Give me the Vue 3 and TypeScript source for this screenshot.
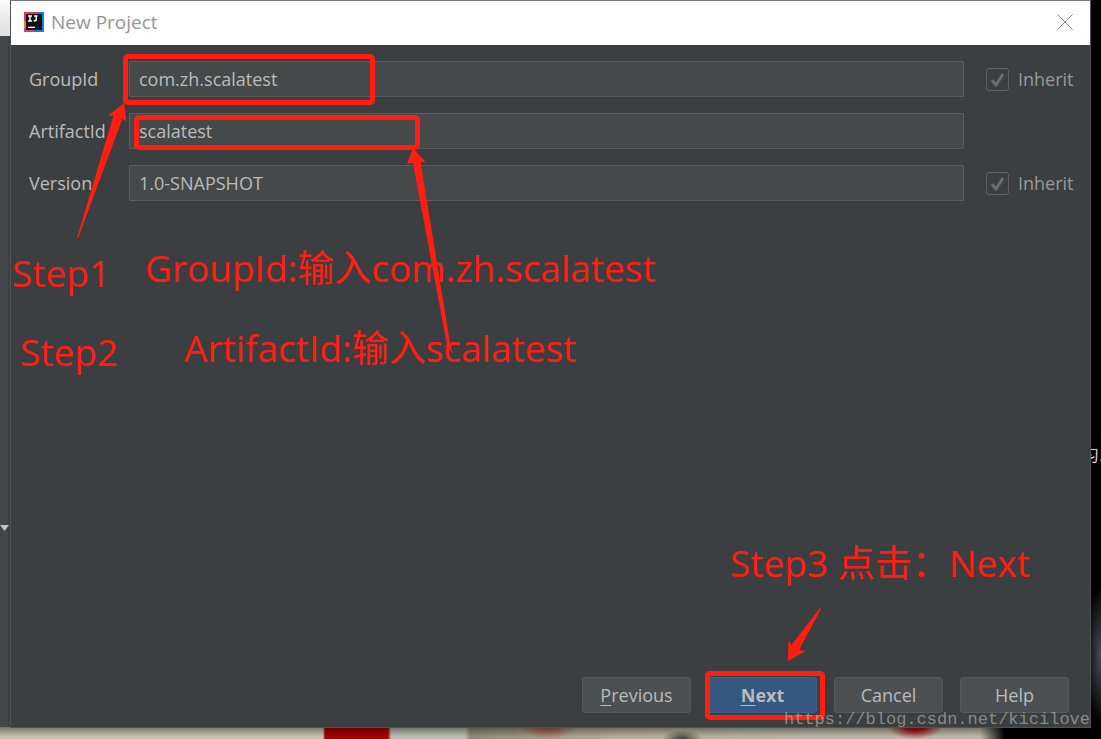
<script setup lang="ts">
import { ref } from 'vue'

interface Field {
  id: string
  label: string
  value: string
  inherit: boolean
  ring?: string
}

const fields = ref<Field[]>([
  { id: 'group', label: 'GroupId', value: 'com.zh.scalatest', inherit: true, ring: 'ring-group' },
  { id: 'artifact', label: 'ArtifactId', value: 'scalatest', inherit: false, ring: 'ring-artifact' },
  { id: 'version', label: 'Version', value: '1.0-SNAPSHOT', inherit: true },
])
</script>

<template>
  <div class="desktop">
    <svg class="left-caret" viewBox="0 0 9 6" aria-hidden="true"><path d="M0 0h9L4.5 6z" fill="#c4c4c4" /></svg>
    <span class="side-text" aria-hidden="true">习1</span>
    <div class="wallpaper" aria-hidden="true"></div>

    <main class="window">
      <header class="titlebar">
        <svg class="logo" viewBox="0 0 20 20" aria-hidden="true">
          <path d="M0 0h20v20H0z" fill="#087cfa" />
          <path d="M0 0h14L8 10 0 11z" fill="#e8315b" />
          <path d="M0 9l5 2-1 5-4 1z" fill="#f5852a" />
          <path d="M0 16l7-3 4 7H0z" fill="#d63a83" />
          <path d="M2 2h16v16H2z" fill="#111" />
          <path d="M4 4h4M6 4v5M4 9h4M10 4h3.500M12.300 4v3.500Q12.300 9 9.700 9" fill="none" stroke="#fff" stroke-width="1.500" />
          <path d="M4 14.700h7v1.300H4z" fill="#fff" />
        </svg>
        <h1>New Project</h1>
        <button class="close" type="button" aria-label="Close">
          <svg viewBox="0 0 16 16"><path d="M.5.5l15 15M15.500.5l-15 15" fill="none" stroke="#858585" stroke-width="1" /></svg>
        </button>
      </header>

      <form class="body" @submit.prevent>
        <div class="fields">
          <div v-for="f in fields" :key="f.id" class="row">
            <label :for="f.id">{{ f.label }}</label>
            <div class="control">
              <input :id="f.id" v-model="f.value" type="text" spellcheck="false" />
              <span v-if="f.ring" class="ring" :class="f.ring"></span>
            </div>
            <label v-if="f.inherit" class="inherit">
              <span class="tick">
                <input type="checkbox" checked disabled />
                <svg viewBox="0 0 23 23" aria-hidden="true"><path d="M6 12l4 5 7-11" fill="none" stroke="#6b6d6e" stroke-width="3" /></svg>
              </span>
              <span>Inherit</span>
            </label>
          </div>
        </div>

        <footer class="actions">
          <button type="button"><u>P</u>revious</button>
          <button type="submit" class="primary"><u>N</u>ext<span class="ring ring-next"></span></button>
          <button type="button">Cancel</button>
          <button type="button">Help</button>
        </footer>
      </form>
    </main>

    <div class="notes">
      <span class="note step1">Step1</span>
      <span class="note group-note">GroupId:输入com.zh.scalatest</span>
      <span class="note step2">Step2</span>
      <span class="note artifact-note">ArtifactId:输入scalatest</span>
      <svg class="arrows" width="470" height="370" viewBox="0 0 470 370" aria-hidden="true">
        <path d="M124 103l2.500 19-4-3.500L78 238.500l-1-.5 36.500-122.500-5.500.5z" />
        <path d="M413 148l13 14.500-5.500-.5L450 343l3 12-5-9-6 2 5-3L413 163l-6 1z" />
      </svg>
    </div>
    <div class="notes notes-end">
      <span class="note step3">Step3 点击：Next</span>
      <svg class="arrow-next" width="36" height="56" viewBox="0 0 36 56" aria-hidden="true">
        <path d="M34 1l1 1-22 41 6.500 1L2 54l.5-20 3 4z" />
      </svg>
    </div>
    <span class="watermark">https://blog.csdn.net/kicilove</span>
  </div>
</template>

<style>
body {
  margin: 0;
  background: #000;
}
</style>

<style scoped>
.desktop {
  position: relative;
  box-sizing: border-box;
  display: flex;
  min-height: 100vh;
  padding: 0 10px 11px;
  overflow: hidden;
  font-family: "Open Sans", "Noto Sans", "Noto Sans CJK SC", sans-serif;
  background:
    radial-gradient(ellipse 16px 70px at 100% 655px, #4c4a5a, transparent) no-repeat,
    linear-gradient(#fafafa, #dedede) 0 0 / 11px 36px no-repeat,
    linear-gradient(90deg, #454649 60%, #3b3c3e) 0 36px / 11px calc(100% - 48px) no-repeat,
    #000;
}
.wallpaper {
  position: absolute;
  left: 0;
  bottom: 0;
  width: 92%;
  height: 12px;
  background:
    linear-gradient(rgba(0, 0, 0, .4), transparent 80%),
    radial-gradient(ellipse 28px 12px at 915px 0, #a01418 30%, transparent) no-repeat,
    radial-gradient(ellipse 28px 12px at 548px 0, #a44b3c, transparent) no-repeat,
    radial-gradient(ellipse 20px 9px at 682px 12px, #4c5548 20%, transparent) no-repeat,
    linear-gradient(90deg, #c4c3ad 0 323px, #a80000 325px 388px, #b9bcb0 391px 465px, #8f8b76 470px, #b5ad98 620px, #bcb8a9 980px, #000 1005px);
}
.left-caret {
  position: absolute;
  left: 0;
  top: 525px;
  width: 9px;
  height: 6px;
}
.side-text {
  position: absolute;
  left: 1083px;
  top: 444px;
  width: 30px;
  color: #d8d8d8;
  font: 16px/20px "Noto Sans CJK SC", sans-serif;
}
.window {
  position: relative;
  box-sizing: border-box;
  display: flex;
  flex: 1;
  flex-direction: column;
  border: 1px solid #505355;
  border-top-color: #777;
  background: #3c3f41;
  color: #bbb;
}
.titlebar {
  display: flex;
  align-items: center;
  gap: 7px;
  box-sizing: border-box;
  height: 44px;
  padding: 0 17px 2px 13px;
  background: #fff;
}
.logo {
  width: 20px;
  height: 20px;
}
h1 {
  flex: 1;
  margin: 0;
  color: #959595;
  font-size: 19px;
  font-weight: 400;
  line-height: 24px;
}
.close {
  width: 16px;
  height: 16px;
  padding: 0;
  border: 0;
  background: none;
}
.close svg {
  display: block;
}
.body {
  display: flex;
  flex: 1;
  flex-direction: column;
  justify-content: space-between;
  padding: 16px 16px 14px 18px;
  font-size: 18px;
  line-height: 24px;
}
.fields {
  display: grid;
  gap: 16px;
}
.row {
  display: grid;
  grid-template-columns: 100px 1fr 110px;
  align-items: center;
}
.control {
  position: relative;
}
input[type="text"] {
  box-sizing: border-box;
  display: block;
  width: 100%;
  height: 36px;
  padding: 0 9px;
  border: 1px solid #5b5e5f;
  border-radius: 1px;
  outline: 0;
  background: #45494a;
  color: #bbb;
  font: inherit;
}
.inherit {
  display: flex;
  align-items: center;
  gap: 9px;
  padding-left: 22px;
  color: #999;
}
.tick {
  display: grid;
  width: 23px;
  height: 23px;
}
.tick > * {
  grid-area: 1 / 1;
}
.tick input {
  appearance: none;
  margin: 0;
  border: 1px solid #5f6162;
  border-radius: 3px;
}
.actions {
  display: flex;
  justify-content: flex-end;
  gap: 17px;
  padding-right: 5px;
}
.actions button {
  position: relative;
  width: 109px;
  height: 36px;
  padding: 0;
  border: 1px solid #57595a;
  border-radius: 3px;
  background: #4c5052;
  color: #bbb;
  font: inherit;
}
.actions .primary {
  border-color: #3c618c;
  background: #365880;
  font-weight: 700;
}
u {
  text-underline-offset: 3px;
}
.ring {
  position: absolute;
  box-sizing: border-box;
  border: 5px solid #ff1e10;
  border-radius: 5px;
  pointer-events: none;
}
.ring-group {
  left: -6px;
  top: -7px;
  width: 252px;
  height: 51px;
}
.ring-artifact {
  left: 5px;
  top: 2px;
  width: 286px;
  height: 35px;
}
.ring-next {
  left: -4px;
  top: -7px;
  width: 120px;
  height: 49px;
}
.notes {
  position: absolute;
  left: 0;
  top: 0;
  color: #ff1e10;
  font-size: 37px;
  line-height: 48px;
  white-space: nowrap;
  pointer-events: none;
}
.notes-end {
  left: auto;
  top: auto;
  right: 0;
  bottom: 0;
  width: 371px;
  height: 200px;
}
.note {
  position: absolute;
}
.step1 {
  left: 12px;
  top: 249px;
}
.group-note {
  left: 145px;
  top: 244px;
}
.step2 {
  left: 20px;
  top: 328px;
}
.artifact-note {
  left: 184px;
  top: 324px;
}
.step3 {
  left: 0;
  top: 0;
}
.arrows,
.arrow-next {
  position: absolute;
  left: 0;
  top: 0;
  fill: #ff1e10;
}
.arrow-next {
  left: 56px;
  top: 68px;
}
.watermark {
  position: absolute;
  right: 11px;
  bottom: 8px;
  color: rgba(190, 190, 185, .6);
  font: 17px/22px "Liberation Mono", monospace;
  pointer-events: none;
}
</style>
